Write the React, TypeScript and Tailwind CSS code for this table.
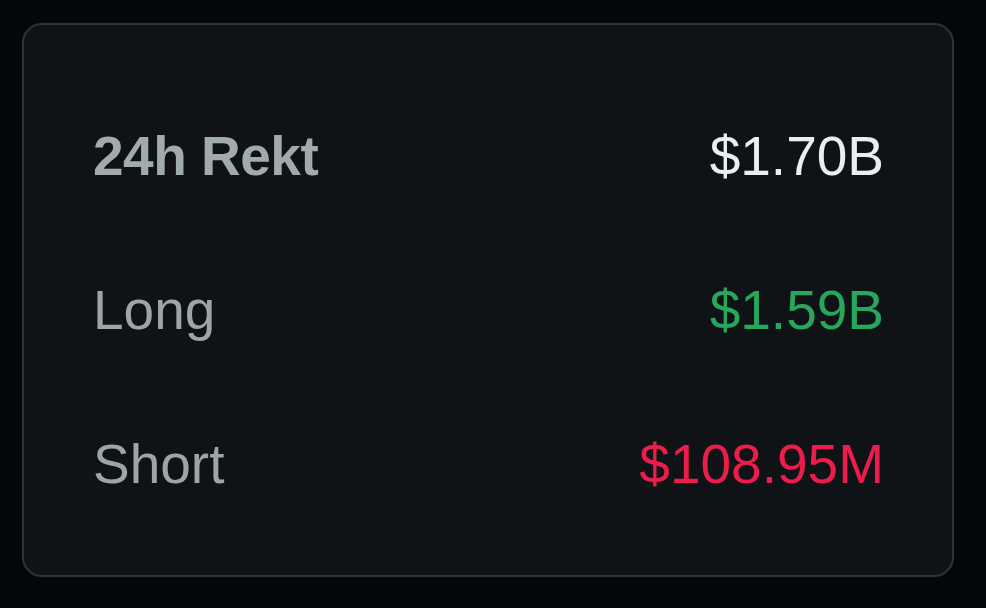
const rows: { label: string; value: string; labelClass: string; valueClass: string }[] = [
  { label: "24h Rekt", value: "$1.70B", labelClass: "font-bold tracking-[-0.5px] text-[#a1abad]", valueClass: "text-[#e9eff1]" },
  { label: "Long", value: "$1.59B", labelClass: "text-[#9ca6a9]", valueClass: "text-[#27a65e]" },
  { label: "Short", value: "$108.95M", labelClass: "text-[#9ca6a9]", valueClass: "text-[#ec1d4c]" },
];

export default function App() {
  return (
    <main className="min-h-screen w-full bg-[#05080b] pl-[22px] pt-[23px] font-['Liberation_Sans',Arial,sans-serif]">
      {/* Liquidation card */}
      <div className="w-[932px] h-[554px] rounded-[20px] border-2 border-[#2b3437] bg-[#101316] pl-[69px] pr-[68px] pt-[54px]">
        {rows.map((r) => (
          <div key={r.label} className="flex h-[154px] items-center justify-between text-[55px] leading-none">
            <span className={r.labelClass}>{r.label}</span>
            <span className={r.valueClass}>{r.value}</span>
          </div>
        ))}
      </div>
    </main>
  );
}
